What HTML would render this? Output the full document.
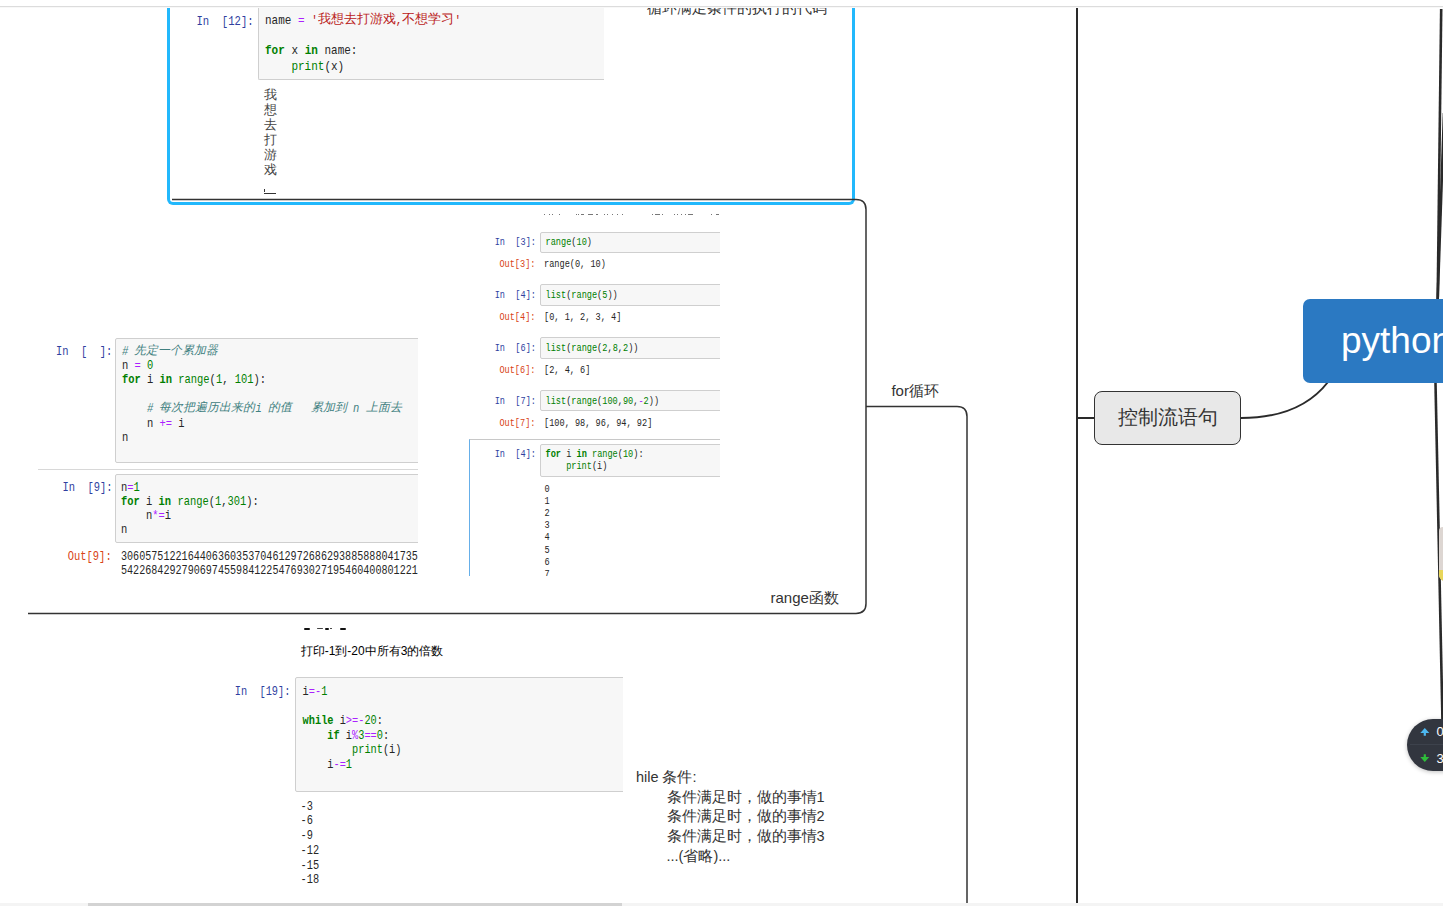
<!DOCTYPE html><html><head><meta charset="utf-8"><style>
html,body{margin:0;padding:0;background:#fff;width:1443px;height:906px;overflow:hidden;position:relative}
.m{position:absolute;white-space:pre;font-family:"Liberation Mono",monospace;color:#262626}
.s{position:absolute;white-space:pre;font-family:"Liberation Sans",sans-serif}
.k{color:#008000;font-weight:bold}
.b{color:#008000}
.n{color:#008000}
.st{color:#BA2121}
.o{color:#AA22FF}
.c{color:#408080;font-style:italic}
.pi{color:#303F9F}
.t3{color:#444}
.po{color:#D84315}
</style></head><body>

<div style="position:absolute;left:600px;top:8px;width:300px;height:22px;overflow:hidden"><div style="position:absolute;left:-600px;top:-8px;width:1443px;height:906px">
<div class="s" style="left:647px;top:-0.20px;font-size:15px;line-height:15px;color:#333;">循环满足条件的执行的代码</div>
</div></div>
<div style="position:absolute;left:160px;top:8px;width:710px;height:197px;overflow:hidden"><div style="position:absolute;left:-160px;top:-8px;width:1443px;height:906px">
<div style="position:absolute;left:258px;top:0px;width:346px;height:80px;background:#f7f7f7;border-left:1px solid #cfcfcf;border-bottom:1px solid #cfcfcf;border-radius:0 0 0 2px;box-sizing:border-box"></div>
<div class="m" style="left:196.4px;top:16.88px;font-size:10.6px;line-height:10.6px;transform:scaleY(1.18);transform-origin:0 8.12px"><span class="pi">In&nbsp;&nbsp;[12]:</span></div>
<div class="m" style="left:265px;top:16.27px;font-size:11px;line-height:11px;transform:scaleY(1.18);transform-origin:0 8.43px">name&nbsp;<span class="o">=</span>&nbsp;<span class="st">&#x27;<span style="display:inline-block;font-size:13px;line-height:0;transform:scaleY(0.8475)">我想去打游戏</span>,<span style="display:inline-block;font-size:13px;line-height:0;transform:scaleY(0.8475)">不想学习</span>&#x27;</span></div>
<div class="m" style="left:265px;top:46.47px;font-size:11px;line-height:11px;transform:scaleY(1.18);transform-origin:0 8.43px"><span class="k">for</span>&nbsp;x&nbsp;<span class="k">in</span>&nbsp;name:</div>
<div class="m" style="left:265px;top:62.17px;font-size:11px;line-height:11px;transform:scaleY(1.18);transform-origin:0 8.43px">&nbsp;&nbsp;&nbsp;&nbsp;<span class="b">print</span>(x)</div>
<div class="m" style="left:263.5px;top:90.57px;font-size:11px;line-height:11px;transform:scaleY(1);transform-origin:0 8.43px"><span class="t3"><span style="display:inline-block;font-size:12.8px;line-height:0;transform:scaleY(1.0000)">我</span></span></div>
<div class="m" style="left:263.5px;top:105.67px;font-size:11px;line-height:11px;transform:scaleY(1);transform-origin:0 8.43px"><span class="t3"><span style="display:inline-block;font-size:12.8px;line-height:0;transform:scaleY(1.0000)">想</span></span></div>
<div class="m" style="left:263.5px;top:120.77px;font-size:11px;line-height:11px;transform:scaleY(1);transform-origin:0 8.43px"><span class="t3"><span style="display:inline-block;font-size:12.8px;line-height:0;transform:scaleY(1.0000)">去</span></span></div>
<div class="m" style="left:263.5px;top:135.87px;font-size:11px;line-height:11px;transform:scaleY(1);transform-origin:0 8.43px"><span class="t3"><span style="display:inline-block;font-size:12.8px;line-height:0;transform:scaleY(1.0000)">打</span></span></div>
<div class="m" style="left:263.5px;top:150.97px;font-size:11px;line-height:11px;transform:scaleY(1);transform-origin:0 8.43px"><span class="t3"><span style="display:inline-block;font-size:12.8px;line-height:0;transform:scaleY(1.0000)">游</span></span></div>
<div class="m" style="left:263.5px;top:166.07px;font-size:11px;line-height:11px;transform:scaleY(1);transform-origin:0 8.43px"><span class="t3"><span style="display:inline-block;font-size:12.8px;line-height:0;transform:scaleY(1.0000)">戏</span></span></div>
</div></div>
<div style="position:absolute;left:264px;top:189px;width:1px;height:3px;background:#333"></div>
<div style="position:absolute;left:264px;top:193px;width:12px;height:1px;background:#333"></div>
<div style="position:absolute;left:167px;top:8px;width:688px;height:197px;border:3px solid #22b8fc;border-top:none;border-radius:0 0 6px 6px;box-sizing:border-box"></div>
<div style="position:absolute;left:469px;top:207px;width:251px;height:369px;overflow:hidden"><div style="position:absolute;left:-469px;top:-207px;width:1443px;height:906px">
<div style="position:absolute;left:544px;top:214px;width:1px;height:1px;background:#777"></div>
<div style="position:absolute;left:549px;top:214px;width:1px;height:1px;background:#777"></div>
<div style="position:absolute;left:552px;top:214px;width:1px;height:1px;background:#777"></div>
<div style="position:absolute;left:559px;top:214px;width:1px;height:1px;background:#777"></div>
<div style="position:absolute;left:576px;top:214px;width:1px;height:1px;background:#777"></div>
<div style="position:absolute;left:578px;top:214px;width:1px;height:1px;background:#777"></div>
<div style="position:absolute;left:581px;top:214px;width:3px;height:1px;background:#777"></div>
<div style="position:absolute;left:588px;top:214px;width:5px;height:1px;background:#777"></div>
<div style="position:absolute;left:596px;top:214px;width:2px;height:1px;background:#777"></div>
<div style="position:absolute;left:604px;top:214px;width:1px;height:1px;background:#777"></div>
<div style="position:absolute;left:607px;top:214px;width:1px;height:1px;background:#777"></div>
<div style="position:absolute;left:612px;top:214px;width:1px;height:1px;background:#777"></div>
<div style="position:absolute;left:617px;top:214px;width:1px;height:1px;background:#777"></div>
<div style="position:absolute;left:622px;top:214px;width:1px;height:1px;background:#777"></div>
<div style="position:absolute;left:652px;top:214px;width:1px;height:1px;background:#777"></div>
<div style="position:absolute;left:655px;top:214px;width:5px;height:1px;background:#777"></div>
<div style="position:absolute;left:662px;top:214px;width:1px;height:1px;background:#777"></div>
<div style="position:absolute;left:674px;top:214px;width:1px;height:1px;background:#777"></div>
<div style="position:absolute;left:677px;top:214px;width:1px;height:1px;background:#777"></div>
<div style="position:absolute;left:681px;top:214px;width:1px;height:1px;background:#777"></div>
<div style="position:absolute;left:685px;top:214px;width:1px;height:1px;background:#777"></div>
<div style="position:absolute;left:688px;top:214px;width:5px;height:1px;background:#777"></div>
<div style="position:absolute;left:711px;top:214px;width:1px;height:1px;background:#777"></div>
<div style="position:absolute;left:716px;top:214px;width:3px;height:1px;background:#777"></div>
<div style="position:absolute;left:540px;top:231.5px;width:190px;height:21.69999999999999px;background:#f7f7f7;border:1px solid #cfcfcf;border-radius:2px;box-sizing:border-box"></div>
<div class="m" style="left:494.7px;top:239.41px;font-size:8.6px;line-height:8.6px;transform:scaleY(1.18);transform-origin:0 6.59px"><span class="pi">In&nbsp;&nbsp;[3]:</span></div>
<div class="m" style="left:545.5px;top:239.41px;font-size:8.6px;line-height:8.6px;transform:scaleY(1.18);transform-origin:0 6.59px"><span class="b">range</span>(<span class="n">10</span>)</div>
<div class="m" style="left:499.4px;top:261.01px;font-size:8.6px;line-height:8.6px;transform:scaleY(1.18);transform-origin:0 6.59px"><span class="po">Out[3]:</span></div>
<div class="m" style="left:544px;top:261.01px;font-size:8.6px;line-height:8.6px;transform:scaleY(1.18);transform-origin:0 6.59px">range(0,&nbsp;10)</div>
<div style="position:absolute;left:540px;top:284.4px;width:190px;height:21.600000000000023px;background:#f7f7f7;border:1px solid #cfcfcf;border-radius:2px;box-sizing:border-box"></div>
<div class="m" style="left:494.7px;top:292.21px;font-size:8.6px;line-height:8.6px;transform:scaleY(1.18);transform-origin:0 6.59px"><span class="pi">In&nbsp;&nbsp;[4]:</span></div>
<div class="m" style="left:545.5px;top:292.21px;font-size:8.6px;line-height:8.6px;transform:scaleY(1.18);transform-origin:0 6.59px"><span class="b">list</span>(<span class="b">range</span>(<span class="n">5</span>))</div>
<div class="m" style="left:499.4px;top:313.91px;font-size:8.6px;line-height:8.6px;transform:scaleY(1.18);transform-origin:0 6.59px"><span class="po">Out[4]:</span></div>
<div class="m" style="left:544px;top:313.91px;font-size:8.6px;line-height:8.6px;transform:scaleY(1.18);transform-origin:0 6.59px">[0,&nbsp;1,&nbsp;2,&nbsp;3,&nbsp;4]</div>
<div style="position:absolute;left:540px;top:337.3px;width:190px;height:21.5px;background:#f7f7f7;border:1px solid #cfcfcf;border-radius:2px;box-sizing:border-box"></div>
<div class="m" style="left:494.7px;top:345.11px;font-size:8.6px;line-height:8.6px;transform:scaleY(1.18);transform-origin:0 6.59px"><span class="pi">In&nbsp;&nbsp;[6]:</span></div>
<div class="m" style="left:545.5px;top:345.11px;font-size:8.6px;line-height:8.6px;transform:scaleY(1.18);transform-origin:0 6.59px"><span class="b">list</span>(<span class="b">range</span>(<span class="n">2</span>,<span class="n">8</span>,<span class="n">2</span>))</div>
<div class="m" style="left:499.4px;top:366.61px;font-size:8.6px;line-height:8.6px;transform:scaleY(1.18);transform-origin:0 6.59px"><span class="po">Out[6]:</span></div>
<div class="m" style="left:544px;top:366.61px;font-size:8.6px;line-height:8.6px;transform:scaleY(1.18);transform-origin:0 6.59px">[2,&nbsp;4,&nbsp;6]</div>
<div style="position:absolute;left:540px;top:390.2px;width:190px;height:21.19999999999999px;background:#f7f7f7;border:1px solid #cfcfcf;border-radius:2px;box-sizing:border-box"></div>
<div class="m" style="left:494.7px;top:398.01px;font-size:8.6px;line-height:8.6px;transform:scaleY(1.18);transform-origin:0 6.59px"><span class="pi">In&nbsp;&nbsp;[7]:</span></div>
<div class="m" style="left:545.5px;top:398.01px;font-size:8.6px;line-height:8.6px;transform:scaleY(1.18);transform-origin:0 6.59px"><span class="b">list</span>(<span class="b">range</span>(<span class="n">100</span>,<span class="n">90</span>,<span class="o">-</span><span class="n">2</span>))</div>
<div class="m" style="left:499.4px;top:419.81px;font-size:8.6px;line-height:8.6px;transform:scaleY(1.18);transform-origin:0 6.59px"><span class="po">Out[7]:</span></div>
<div class="m" style="left:544px;top:419.81px;font-size:8.6px;line-height:8.6px;transform:scaleY(1.18);transform-origin:0 6.59px">[100,&nbsp;98,&nbsp;96,&nbsp;94,&nbsp;92]</div>
<div style="position:absolute;left:469px;top:438.5px;width:261px;height:161.5px;border-top:1px solid #c8c8c8;border-left:1px solid #66afe9;box-sizing:border-box"></div>
<div style="position:absolute;left:540px;top:443.9px;width:190px;height:33.400000000000034px;background:#f7f7f7;border:1px solid #cfcfcf;border-radius:2px;box-sizing:border-box"></div>
<div class="m" style="left:494.7px;top:451.01px;font-size:8.6px;line-height:8.6px;transform:scaleY(1.18);transform-origin:0 6.59px"><span class="pi">In&nbsp;&nbsp;[4]:</span></div>
<div class="m" style="left:545.5px;top:451.01px;font-size:8.6px;line-height:8.6px;transform:scaleY(1.18);transform-origin:0 6.59px"><span class="k">for</span>&nbsp;i&nbsp;<span class="k">in</span>&nbsp;<span class="b">range</span>(<span class="n">10</span>):</div>
<div class="m" style="left:545.5px;top:463.01px;font-size:8.6px;line-height:8.6px;transform:scaleY(1.18);transform-origin:0 6.59px">&nbsp;&nbsp;&nbsp;&nbsp;<span class="b">print</span>(i)</div>
<div class="m" style="left:544.5px;top:485.91px;font-size:8.6px;line-height:8.6px;transform:scaleY(1.18);transform-origin:0 6.59px">0</div>
<div class="m" style="left:544.5px;top:498.04px;font-size:8.6px;line-height:8.6px;transform:scaleY(1.18);transform-origin:0 6.59px">1</div>
<div class="m" style="left:544.5px;top:510.17px;font-size:8.6px;line-height:8.6px;transform:scaleY(1.18);transform-origin:0 6.59px">2</div>
<div class="m" style="left:544.5px;top:522.30px;font-size:8.6px;line-height:8.6px;transform:scaleY(1.18);transform-origin:0 6.59px">3</div>
<div class="m" style="left:544.5px;top:534.43px;font-size:8.6px;line-height:8.6px;transform:scaleY(1.18);transform-origin:0 6.59px">4</div>
<div class="m" style="left:544.5px;top:546.56px;font-size:8.6px;line-height:8.6px;transform:scaleY(1.18);transform-origin:0 6.59px">5</div>
<div class="m" style="left:544.5px;top:558.69px;font-size:8.6px;line-height:8.6px;transform:scaleY(1.18);transform-origin:0 6.59px">6</div>
<div class="m" style="left:544.5px;top:570.82px;font-size:8.6px;line-height:8.6px;transform:scaleY(1.18);transform-origin:0 6.59px">7</div>
</div></div>
<div style="position:absolute;left:38px;top:330px;width:380px;height:250px;overflow:hidden"><div style="position:absolute;left:-38px;top:-330px;width:1443px;height:906px">
<div style="position:absolute;left:115px;top:337.7px;width:315px;height:125.5px;background:#f7f7f7;border:1px solid #cfcfcf;border-radius:2px;box-sizing:border-box"></div>
<div class="m" style="left:56px;top:346.69px;font-size:10.45px;line-height:10.45px;transform:scaleY(1.18);transform-origin:0 8.01px"><span class="pi">In&nbsp;&nbsp;[&nbsp;&nbsp;]:</span></div>
<div class="m" style="left:121.9px;top:346.69px;font-size:10.45px;line-height:10.45px;transform:scaleY(1.18);transform-origin:0 8.01px"><span class="c">#&nbsp;<span style="display:inline-block;font-size:11.8px;line-height:0;transform:scaleY(0.8475)">先定一个累加器</span></span></div>
<div class="m" style="left:121.9px;top:361.09px;font-size:10.45px;line-height:10.45px;transform:scaleY(1.18);transform-origin:0 8.01px">n&nbsp;<span class="o">=</span>&nbsp;<span class="n">0</span></div>
<div class="m" style="left:121.9px;top:375.49px;font-size:10.45px;line-height:10.45px;transform:scaleY(1.18);transform-origin:0 8.01px"><span class="k">for</span>&nbsp;i&nbsp;<span class="k">in</span>&nbsp;<span class="b">range</span>(<span class="n">1</span>,&nbsp;<span class="n">101</span>):</div>
<div class="m" style="left:121.9px;top:404.29px;font-size:10.45px;line-height:10.45px;transform:scaleY(1.18);transform-origin:0 8.01px">&nbsp;&nbsp;&nbsp;&nbsp;<span class="c">#&nbsp;<span style="display:inline-block;font-size:11.8px;line-height:0;transform:scaleY(0.8475)">每次把遍历出来的</span>i&nbsp;<span style="display:inline-block;font-size:11.8px;line-height:0;transform:scaleY(0.8475)">的值</span>&nbsp;&nbsp;&nbsp;<span style="display:inline-block;font-size:11.8px;line-height:0;transform:scaleY(0.8475)">累加到</span>&nbsp;n&nbsp;<span style="display:inline-block;font-size:11.8px;line-height:0;transform:scaleY(0.8475)">上面去</span></span></div>
<div class="m" style="left:121.9px;top:418.69px;font-size:10.45px;line-height:10.45px;transform:scaleY(1.18);transform-origin:0 8.01px">&nbsp;&nbsp;&nbsp;&nbsp;n&nbsp;<span class="o">+=</span>&nbsp;i</div>
<div class="m" style="left:121.9px;top:433.09px;font-size:10.45px;line-height:10.45px;transform:scaleY(1.18);transform-origin:0 8.01px">n</div>
<div style="position:absolute;left:38px;top:469px;width:392px;height:1px;background:#d8d8d8"></div>
<div style="position:absolute;left:115px;top:474.4px;width:315px;height:68.39999999999998px;background:#f7f7f7;border:1px solid #cfcfcf;border-radius:2px;box-sizing:border-box"></div>
<div class="m" style="left:62.5px;top:482.99px;font-size:10.45px;line-height:10.45px;transform:scaleY(1.18);transform-origin:0 8.01px"><span class="pi">In&nbsp;&nbsp;[9]:</span></div>
<div class="m" style="left:121px;top:482.89px;font-size:10.45px;line-height:10.45px;transform:scaleY(1.18);transform-origin:0 8.01px">n<span class="o">=</span><span class="n">1</span></div>
<div class="m" style="left:121px;top:497.09px;font-size:10.45px;line-height:10.45px;transform:scaleY(1.18);transform-origin:0 8.01px"><span class="k">for</span>&nbsp;i&nbsp;<span class="k">in</span>&nbsp;<span class="b">range</span>(<span class="n">1</span>,<span class="n">301</span>):</div>
<div class="m" style="left:121px;top:511.29px;font-size:10.45px;line-height:10.45px;transform:scaleY(1.18);transform-origin:0 8.01px">&nbsp;&nbsp;&nbsp;&nbsp;n<span class="o">*=</span>i</div>
<div class="m" style="left:121px;top:525.49px;font-size:10.45px;line-height:10.45px;transform:scaleY(1.18);transform-origin:0 8.01px">n</div>
<div class="m" style="left:67.8px;top:551.89px;font-size:10.45px;line-height:10.45px;transform:scaleY(1.18);transform-origin:0 8.01px"><span class="po">Out[9]:</span></div>
<div class="m" style="left:121px;top:552.86px;font-size:10.1px;line-height:10.1px;transform:scaleY(1.18);transform-origin:0 7.74px">3060575122164406360353704612972686293885888041735769994167767412594765331767168674655152914224775733499391478887017</div>
<div class="m" style="left:121px;top:566.56px;font-size:10.1px;line-height:10.1px;transform:scaleY(1.18);transform-origin:0 7.74px">5422684292790697455984122547693027195460400801221577625217685425596535690350678872526432189626429936520457644883038</div>
</div></div>
<div style="position:absolute;left:220px;top:614px;width:403px;height:289px;overflow:hidden"><div style="position:absolute;left:-220px;top:-614px;width:1443px;height:906px">
<div style="position:absolute;left:304.2px;top:627.9px;width:5.600000000000023px;height:2.0px;background:#111;border-radius:1px"></div>
<div style="position:absolute;left:316.6px;top:627.9px;width:6.899999999999977px;height:1.2000000000000455px;background:#444;border-radius:1px"></div>
<div style="position:absolute;left:324.5px;top:627.9px;width:4.300000000000011px;height:2.0px;background:#111;border-radius:1px"></div>
<div style="position:absolute;left:330px;top:627.9px;width:2px;height:1.5px;background:#333;border-radius:1px"></div>
<div style="position:absolute;left:340px;top:627.9px;width:6px;height:2.0px;background:#111;border-radius:1px"></div>
<div class="s" style="left:300.7px;top:644.84px;font-size:12px;line-height:12px;color:#000;">打印-1到-20中所有3的倍数</div>
<div style="position:absolute;left:295.1px;top:677.3px;width:344.9px;height:114.90000000000009px;background:#f7f7f7;border:1px solid #cfcfcf;border-radius:2px;box-sizing:border-box"></div>
<div class="m" style="left:234.8px;top:686.71px;font-size:10.3px;line-height:10.3px;transform:scaleY(1.18);transform-origin:0 7.89px"><span class="pi">In&nbsp;&nbsp;[19]:</span></div>
<div class="m" style="left:302.6px;top:686.71px;font-size:10.3px;line-height:10.3px;transform:scaleY(1.18);transform-origin:0 7.89px">i<span class="o">=-</span><span class="n">1</span></div>
<div class="m" style="left:302.6px;top:715.91px;font-size:10.3px;line-height:10.3px;transform:scaleY(1.18);transform-origin:0 7.89px"><span class="k">while</span>&nbsp;i<span class="o">&gt;=</span><span class="o">-</span><span class="n">20</span>:</div>
<div class="m" style="left:302.6px;top:730.51px;font-size:10.3px;line-height:10.3px;transform:scaleY(1.18);transform-origin:0 7.89px">&nbsp;&nbsp;&nbsp;&nbsp;<span class="k">if</span>&nbsp;i<span class="o">%</span><span class="n">3</span><span class="o">==</span><span class="n">0</span>:</div>
<div class="m" style="left:302.6px;top:745.11px;font-size:10.3px;line-height:10.3px;transform:scaleY(1.18);transform-origin:0 7.89px">&nbsp;&nbsp;&nbsp;&nbsp;&nbsp;&nbsp;&nbsp;&nbsp;<span class="b">print</span>(i)</div>
<div class="m" style="left:302.6px;top:759.71px;font-size:10.3px;line-height:10.3px;transform:scaleY(1.18);transform-origin:0 7.89px">&nbsp;&nbsp;&nbsp;&nbsp;i<span class="o">-=</span><span class="n">1</span></div>
<div class="m" style="left:300.6px;top:801.61px;font-size:10.3px;line-height:10.3px;transform:scaleY(1.18);transform-origin:0 7.89px">-3</div>
<div class="m" style="left:300.6px;top:816.37px;font-size:10.3px;line-height:10.3px;transform:scaleY(1.18);transform-origin:0 7.89px">-6</div>
<div class="m" style="left:300.6px;top:831.13px;font-size:10.3px;line-height:10.3px;transform:scaleY(1.18);transform-origin:0 7.89px">-9</div>
<div class="m" style="left:300.6px;top:845.89px;font-size:10.3px;line-height:10.3px;transform:scaleY(1.18);transform-origin:0 7.89px">-12</div>
<div class="m" style="left:300.6px;top:860.65px;font-size:10.3px;line-height:10.3px;transform:scaleY(1.18);transform-origin:0 7.89px">-15</div>
<div class="m" style="left:300.6px;top:875.41px;font-size:10.3px;line-height:10.3px;transform:scaleY(1.18);transform-origin:0 7.89px">-18</div>
</div></div>
<div class="s" style="left:635.9px;top:769.53px;font-size:14.5px;line-height:14.5px;color:#333;">hile 条件:</div>
<div class="s" style="left:666.5px;top:789.73px;font-size:14.5px;line-height:14.5px;color:#333;">条件满足时，做的事情1</div>
<div class="s" style="left:666.5px;top:809.33px;font-size:14.5px;line-height:14.5px;color:#333;">条件满足时，做的事情2</div>
<div class="s" style="left:666.5px;top:828.93px;font-size:14.5px;line-height:14.5px;color:#333;">条件满足时，做的事情3</div>
<div class="s" style="left:666.5px;top:848.53px;font-size:14.5px;line-height:14.5px;color:#333;">...(省略)...</div>
<div class="s" style="left:770.5px;top:590.30px;font-size:15px;line-height:15px;color:#333;">range函数</div>
<div class="s" style="left:891.4px;top:383.30px;font-size:15px;line-height:15px;color:#333;">for循环</div>
<svg width="1443" height="906" style="position:absolute;left:0;top:0">
<g fill="none" stroke="#333" stroke-width="1.5">
<path d="M172 199.6 H856 Q866 199.6 866 209.6 V603.6 Q866 613.5 856 613.5 H28"/>
<path d="M866 406.5 H957 Q967 406.5 967 416.5 V903"/>
</g>
<g fill="none" stroke="#2a2a2a" stroke-width="2">
<path d="M1077 8 V903"/>
<path d="M1077 418 H1094"/>
<path d="M1241 418 Q1300 418 1328 382"/>
</g>
<g fill="none" stroke="#2a2a2a" stroke-width="2.6">
<path d="M1441.2 9 L1437.7 299"/>
<path d="M1444 113 L1437.7 299"/>
<path d="M1435.5 383 L1443.5 770"/>
</g>
</svg>
<div class="s" style="left:1094px;top:391px;width:147px;height:54px;box-sizing:border-box;background:#e8e8e8;border:1.3px solid #333;border-radius:8px;font-size:20px;line-height:51px;text-align:center;color:#333">控制流语句</div>
<div class="s" style="left:1303px;top:299px;width:200px;height:84px;background:#2b79c2;border-radius:7px;font-size:37px;line-height:84px;color:#fff;text-indent:38px">python</div>
<div style="position:absolute;left:1438.7px;top:527px;width:10px;height:54px;background:#ddd6d2;border-radius:4px 0 0 6px;overflow:hidden"><div style="position:absolute;left:0;top:43px;width:10px;height:11px;background:#e8d65a"></div></div>
<div style="position:absolute;left:1407px;top:719px;width:80px;height:52px;background:#32363f;border-radius:26px;box-shadow:0 1px 4px rgba(0,0,0,.25)"></div>
<div style="position:absolute;left:1410px;top:744.3px;width:33px;height:1.0px;background:#3d424c"></div>
<svg width="1443" height="906" style="position:absolute;left:0;top:0"><path d="M1424.8 728 L1429.3 733 H1425.9 V735.8 H1423.7 V733 H1420.3 Z" fill="#4db8f0"/><path d="M1424.8 762 L1429.3 757 H1425.9 V754.2 H1423.7 V757 H1420.3 Z" fill="#2ebd3a"/></svg>
<div class="s" style="left:1436.5px;top:723px;font-size:13px;line-height:17px;color:#fff">0</div>
<div class="s" style="left:1436.5px;top:750px;font-size:13px;line-height:17px;color:#fff">3</div>
<div style="position:absolute;left:0px;top:903px;width:1443px;height:3px;background:#f4f4f4"></div>
<div style="position:absolute;left:88px;top:903px;width:534px;height:3px;background:#d3d3d3"></div>
<div style="position:absolute;left:0px;top:0px;width:1443px;height:6px;background:#fff"></div>
<div style="position:absolute;left:0px;top:6px;width:1443px;height:1px;background:#dcdcdc"></div>
<div style="position:absolute;left:0px;top:7px;width:1443px;height:1px;background:#f8f8f8"></div>
</body></html>
